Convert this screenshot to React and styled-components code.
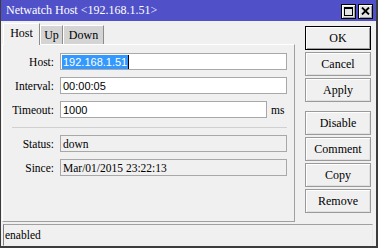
import React from 'react';
import styled, { createGlobalStyle } from 'styled-components';

const serif = `"Liberation Serif", "Times New Roman", serif`;
const sans = `"Liberation Sans", Arial, sans-serif`;

const GlobalStyle = createGlobalStyle`
  html, body { margin: 0; padding: 0; background: #f0f0f0; }
  #root { width: 378px; height: 248px; }
`;

const Window = styled.div`
  box-sizing: border-box;
  width: 378px;
  height: 248px;
  display: flex;
  flex-direction: column;
  background: #f0f0f0;
  border: 1px solid #3c3c3c;
  border-top: 0;
  border-right-width: 2px;
  border-bottom-width: 2px;
  font-family: ${serif};
  font-size: 11.5px;
  color: #000;
  overflow: hidden;
`;

const TitleBar = styled.div`
  flex: none;
  height: 21px;
  display: flex;
  align-items: center;
  background: #5050c8;
  color: #fff;
  padding: 0 3px 0 5px;
`;

const Title = styled.div`
  flex: 1;
  font-size: 12px;
  white-space: nowrap;
`;

const TitleButtons = styled.div`
  display: flex;
  gap: 2px;
  margin-top: 1px;
`;

const TitleButton = styled.div`
  box-sizing: border-box;
  width: 15px;
  height: 15px;
  background: #e4e4e4;
  border: 1px solid #000;
  box-shadow: inset 1px 1px #fff, inset -1px -1px #a0a0a0;
  display: flex;
  align-items: center;
  justify-content: center;
`;

const Main = styled.div`
  flex: none;
  box-sizing: border-box;
  height: 202px;
  display: flex;
  padding: 2px 0 0 1px;
`;

const LeftCol = styled.div`
  width: 293px;
  display: flex;
  flex-direction: column;
`;

const TabRow = styled.div`
  height: 21px;
  display: flex;
  align-items: flex-end;
  padding-left: 1px;
`;

const Tab = styled.div`
  position: relative;
  z-index: 1;
  box-sizing: border-box;
  width: ${p => p.$w}px;
  height: ${p => (p.$active ? 22 : 19)}px;
  margin-bottom: ${p => (p.$active ? -1 : 0)}px;
  background: ${p => (p.$active ? '#f0f0f0' : '#d4d4d4')};
  border-top: 1px solid #fff;
  border-left: 1px solid #fff;
  border-right: 1px solid #8c8c8c;
  display: flex;
  align-items: center;
  justify-content: center;
  padding-bottom: ${p => (p.$active ? 2 : 0)}px;
  font-size: 12px;
`;

const Panel = styled.div`
  box-sizing: border-box;
  height: 178px;
  border: 1px solid;
  border-color: #fff #a0a0a0 #a0a0a0 #fff;
  padding: 8px 7px 0 0;
  display: flex;
  flex-direction: column;
  gap: 7px;
`;

const Row = styled.div`
  display: grid;
  grid-template-columns: 51px 1fr;
  column-gap: 6px;
  align-items: center;
  height: 17px;
`;

const Label = styled.div`
  text-align: right;
  white-space: nowrap;
`;

const Field = styled.div`
  box-sizing: border-box;
  height: 17px;
  width: ${p => (p.$w ? `${p.$w}px` : 'auto')};
  display: flex;
  align-items: center;
  border: 1px solid #a8a8a8;
  background: ${p => (p.$readonly ? 'transparent' : '#fff')};
  padding-left: ${p => (p.$readonly ? 2 : 1)}px;
  font-family: ${p => (p.$readonly ? serif : sans)};
  font-size: ${p => (p.$readonly ? '11.5px' : '11px')};
  white-space: nowrap;
  overflow: hidden;
`;

const Plain = styled.span`
  padding-left: 1px;
`;

const Selected = styled.span`
  background: #3399ff;
  color: #fff;
  padding: 0 1px;
  line-height: 14px;
`;

const Caret = styled.span`
  width: 1px;
  height: 14px;
  background: #000;
`;

const Inline = styled.div`
  display: flex;
  align-items: center;
  gap: 4px;
`;

const Separator = styled.div`
  margin: 2px 0 0 9px;
  height: 0;
  border-top: 1px solid #d0d0d0;
`;

const RightCol = styled.div`
  margin-left: 10px;
  padding-top: 3px;
  display: flex;
  flex-direction: column;
  gap: 2px;
`;

const Button = styled.div`
  box-sizing: border-box;
  width: 66px;
  height: 24px;
  margin-top: ${p => (p.$spaced ? 7 : 0)}px;
  display: flex;
  align-items: center;
  justify-content: center;
  background: #f0f0f0;
  border: 1px solid ${p => (p.$default ? '#000' : '#9a9a9a')};
  box-shadow: inset 1px 1px #fff, inset -1px -1px ${p => (p.$default ? '#a0a0a0' : '#e0e0e0')};
  font-size: 12px;
`;

const StatusBar = styled.div`
  flex: 1;
  display: flex;
  padding: 1px 3px 0 2px;
`;

const StatusField = styled.div`
  flex: 1;
  display: flex;
  align-items: center;
  border: 1px solid;
  border-color: #a0a0a0 #e8e8e8 #f0f0f0 #808080;
  padding-left: 1px;
  padding-bottom: 1px;
`;

const MaxIcon = () => (
  <svg width="9" height="9" viewBox="0 0 9 9">
    <rect x="0.5" y="0.5" width="8" height="8" fill="none" stroke="#000" />
    <rect x="0" y="0" width="9" height="2" fill="#000" />
  </svg>
);

const CloseIcon = () => (
  <svg width="9" height="8" viewBox="0 0 9 8">
    <path d="M1 0.5 L8 7.5 M8 0.5 L1 7.5" stroke="#000" strokeWidth="1.8" fill="none" />
  </svg>
);

export default function App() {
  return (
    <>
      <GlobalStyle />
      <Window>
        <TitleBar>
          <Title>Netwatch Host &lt;192.168.1.51&gt;</Title>
          <TitleButtons>
            <TitleButton><MaxIcon /></TitleButton>
            <TitleButton><CloseIcon /></TitleButton>
          </TitleButtons>
        </TitleBar>
        <Main>
          <LeftCol>
            <TabRow>
              <Tab $w={37} $active>Host</Tab>
              <Tab $w={23}>Up</Tab>
              <Tab $w={41}>Down</Tab>
            </TabRow>
            <Panel>
              <Row>
                <Label>Host:</Label>
                <Field><Selected>192.168.1.51</Selected><Caret /></Field>
              </Row>
              <Row>
                <Label>Interval:</Label>
                <Field><Plain>00:00:05</Plain></Field>
              </Row>
              <Row>
                <Label>Timeout:</Label>
                <Inline>
                  <Field $w={207}><Plain>1000</Plain></Field>
                  <span>ms</span>
                </Inline>
              </Row>
              <Separator />
              <Row>
                <Label>Status:</Label>
                <Field $readonly>down</Field>
              </Row>
              <Row>
                <Label>Since:</Label>
                <Field $readonly>Mar/01/2015 23:22:13</Field>
              </Row>
            </Panel>
          </LeftCol>
          <RightCol>
            <Button $default>OK</Button>
            <Button>Cancel</Button>
            <Button>Apply</Button>
            <Button $spaced>Disable</Button>
            <Button>Comment</Button>
            <Button>Copy</Button>
            <Button>Remove</Button>
          </RightCol>
        </Main>
        <StatusBar>
          <StatusField>enabled</StatusField>
        </StatusBar>
      </Window>
    </>
  );
}
